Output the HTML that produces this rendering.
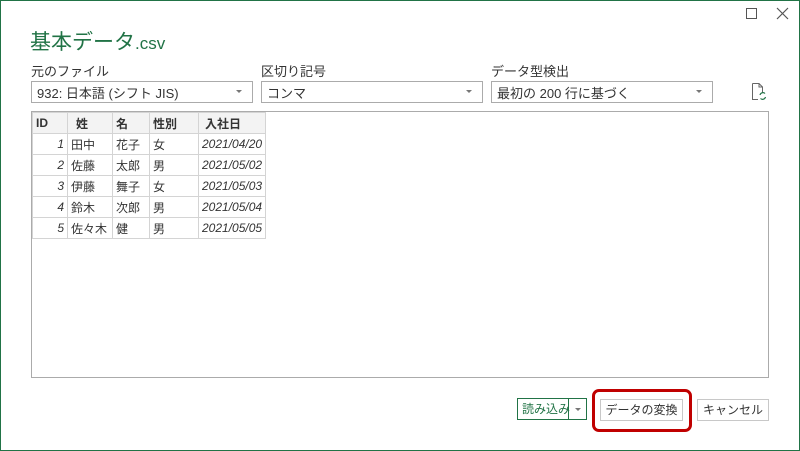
<!DOCTYPE html>
<html><head><meta charset="utf-8"><style>
*{box-sizing:border-box;margin:0;padding:0}
body{width:800px;height:451px;overflow:hidden;background:#fff;font-family:"Liberation Sans","Noto Sans CJK JP",sans-serif;font-size:12px;color:#333}
.frame{position:absolute;left:0;top:0;width:800px;height:451px;border:1px solid #217346}
.abs{position:absolute}
.title{left:30px;top:26px;font-size:21px;color:#217346;white-space:nowrap}
.title small{font-size:17px}
.lbl{top:61px;font-size:13px;color:#333}
.dd{top:81px;height:22px;border:1px solid #ababab;padding:1px 0 0 5px;font-size:13px;white-space:nowrap}
.dd:after{content:"";position:absolute;right:10px;top:8px;border-left:3px solid transparent;border-right:3px solid transparent;border-top:3px solid #777}
.box{left:31px;top:111px;width:738px;height:267px;border:1px solid #ababab}
table{position:absolute;left:32px;top:112px;border-collapse:collapse;font-size:12px}
td,th{border:1px solid #d4d4d4;height:21px;padding:0 3px;white-space:nowrap}
th{background:#f3f3f3;text-align:left;font-weight:bold;font-size:12px}
td.n{text-align:right;font-style:italic}
td.d{font-style:italic}
.btn{height:22px;border:1px solid #c8c8c8;text-align:center;font-size:12px;line-height:20px}
</style></head><body>
<div class="frame"></div>
<div class="abs" style="left:746px;top:8px;width:11px;height:11px;border:1px solid #555"></div>
<svg class="abs" style="left:776px;top:7px" width="13" height="13"><path d="M1 1L12 12M12 1L1 12" stroke="#555" stroke-width="1.2"/></svg>
<div class="abs title">基本データ<small>.csv</small></div>
<div class="abs lbl" style="left:31px">元のファイル</div>
<div class="abs lbl" style="left:261px">区切り記号</div>
<div class="abs lbl" style="left:491px">データ型検出</div>
<div class="abs dd" style="left:31px;width:222px">932: 日本語 (シフト JIS)</div>
<div class="abs dd" style="left:261px;width:222px">コンマ</div>
<div class="abs dd" style="left:491px;width:222px">最初の 200 行に基づく</div>
<svg class="abs" style="left:751px;top:83px" width="16" height="18"><path d="M1.5 0.5H8L11.5 4V10M1.5 0.5V16.5H7" fill="none" stroke="#666"/><path d="M8 .5V4H11.5" fill="none" stroke="#666"/><path d="M9 12a3 3 0 0 1 5-1.5M14.5 14a3 3 0 0 1-5 1.5" fill="none" stroke="#217346" stroke-width="1.2"/></svg>
<div class="abs box"></div>
<table>
<tr><th style="width:35px">ID</th><th style="width:45px;padding-left:8px">姓</th><th style="width:37px">名</th><th style="width:49px">性別</th><th style="width:67px;padding-left:6px">入社日</th></tr>
<tr><td class="n">1</td><td>田中</td><td>花子</td><td>女</td><td class="d">2021/04/20</td></tr>
<tr><td class="n">2</td><td>佐藤</td><td>太郎</td><td>男</td><td class="d">2021/05/02</td></tr>
<tr><td class="n">3</td><td>伊藤</td><td>舞子</td><td>女</td><td class="d">2021/05/03</td></tr>
<tr><td class="n">4</td><td>鈴木</td><td>次郎</td><td>男</td><td class="d">2021/05/04</td></tr>
<tr><td class="n">5</td><td>佐々木</td><td>健</td><td>男</td><td class="d">2021/05/05</td></tr>
</table>
<div class="abs btn" style="left:517px;top:398px;width:70px;border-color:#217346;text-align:left;padding-left:4px;color:#217346">読み込み</div>
<div class="abs" style="left:568px;top:398px;width:1px;height:22px;background:#217346"></div>
<div class="abs" style="left:575px;top:408px;border-left:3px solid transparent;border-right:3px solid transparent;border-top:3px solid #777"></div>
<div class="abs" style="left:592px;top:389px;width:100px;height:43px;border:3px solid #c00000;border-radius:7px"></div>
<div class="abs btn" style="left:600px;top:399px;width:83px">データの変換</div>
<div class="abs btn" style="left:697px;top:399px;width:72px">キャンセル</div>
</body></html>
